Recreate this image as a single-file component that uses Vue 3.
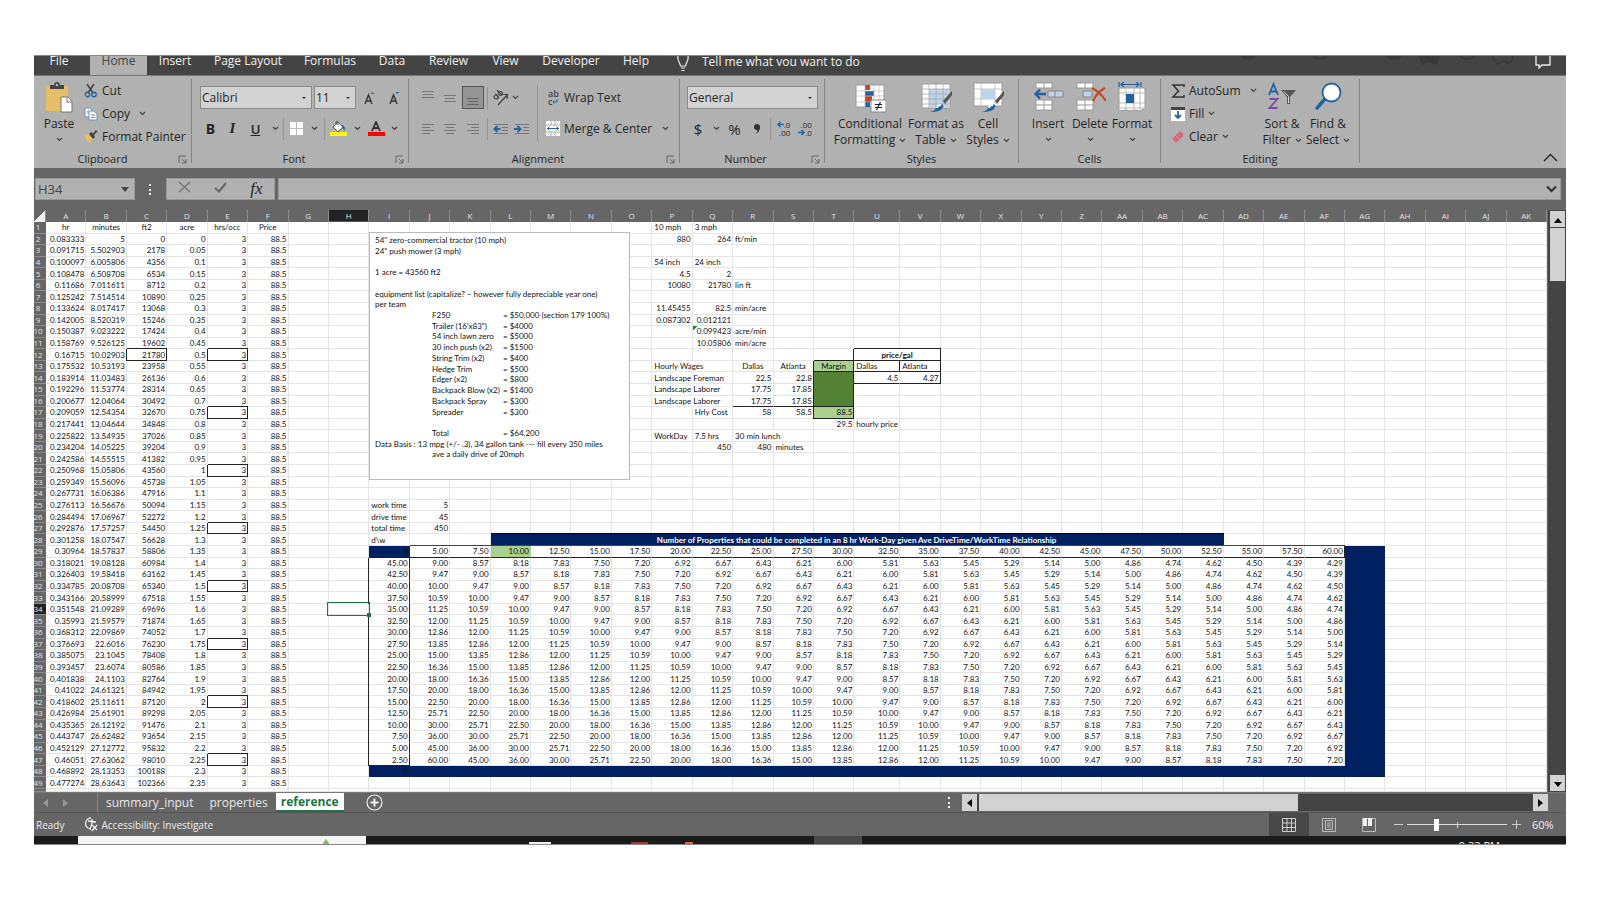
<script setup>
import { ref } from 'vue'

const tabs = ['File', 'Home', 'Insert', 'Page Layout', 'Formulas', 'Data', 'Review', 'View', 'Developer', 'Help']
const sheets = ['summary_input', 'properties', 'reference']
const zoomLevel = ref(60)

function colName(i) {
  return i < 26 ? String.fromCharCode(65 + i) : 'A' + String.fromCharCode(39 + i)
}
const columns = Array.from({ length: 37 }, (_, i) => colName(i))
const col = (name) => columns.indexOf(name)

const cells = {}
function put(name, row, text, cls = '') {
  const key = col(name) + ':' + row
  const old = cells[key] || { text: '', cls: '', span: 1 }
  cells[key] = { ...old, text: text ?? old.text, cls: old.cls + ' ' + cls }
}
const general = (v) => String(Number(v.toFixed(v >= 10 ? 5 : 6)))

/* mowing time by acreage */
;['hr', 'minutes', 'ft2', 'acre', 'hrs/occ', 'Price'].forEach((t, i) => put(columns[i], 1, t, 'c'))
const minutesPerAcre = 1 / (11 / 126 + 1 / 82.5)
for (let i = 0; i < 48; i++) {
  const row = i + 2
  const minutes = 5 + (minutesPerAcre * i) / 20
  put('A', row, general(minutes / 60), 'r')
  put('B', row, general(minutes), 'r')
  put('C', row, String(2178 * i), row === 12 ? 'r box' : 'r')
  put('D', row, String(Number((i / 20).toFixed(2))), 'r')
  put('E', row, '3', row >= 12 && row % 5 === 2 ? 'r box' : 'r')
  put('F', row, '88.5', 'r')
}

/* rates and wages */
const loose = [
  ['P', 1, '10 mph'], ['Q', 1, '3 mph'],
  ['P', 2, '880', 'r'], ['Q', 2, '264', 'r'], ['R', 2, 'ft/min'],
  ['P', 4, '54 inch'], ['Q', 4, '24 inch'],
  ['P', 5, '4.5', 'r'], ['Q', 5, '2', 'r'],
  ['P', 6, '10080', 'r'], ['Q', 6, '21780', 'r'], ['R', 6, 'lin ft'],
  ['P', 8, '11.45455', 'r'], ['Q', 8, '82.5', 'r'], ['R', 8, 'min/acre'],
  ['P', 9, '0.087302', 'r'], ['Q', 9, '0.012121', 'r'],
  ['Q', 10, '0.099423', 'r flag'], ['R', 10, 'acre/min'],
  ['Q', 11, '10.05806', 'r'], ['R', 11, 'min/acre'],
  ['U', 12, 'price/gal', 'c b box'],
  ['P', 13, 'Hourly Wages', 'spill'], ['R', 13, 'Dallas', 'c'], ['S', 13, 'Atlanta', 'c'],
  ['T', 13, 'Margin', 'c light box'], ['U', 13, 'Dallas', 'box'], ['V', 13, 'Atlanta', 'box'],
  ['P', 14, 'Landscape Foreman', 'spill'], ['R', 14, '22.5', 'r'], ['S', 14, '22.8', 'r'],
  ['U', 14, '4.5', 'r bb'], ['V', 14, '4.27', 'r bb br'],
  ['P', 15, 'Landscape Laborer', 'spill'], ['R', 15, '17.75', 'r'], ['S', 15, '17.85', 'r'],
  ['P', 16, 'Landscape Laborer', 'spill'], ['R', 16, '17.75', 'r bb'], ['S', 16, '17.85', 'r bb'],
  ['T', 14, '', 'dark bl br'], ['T', 15, '', 'dark bl br'], ['T', 16, '', 'dark bl br'],
  ['Q', 17, 'Hrly Cost'], ['R', 17, '58', 'r'], ['S', 17, '58.5', 'r'], ['T', 17, '88.5', 'r light box'],
  ['T', 18, '29.5', 'r'], ['U', 18, 'hourly price'],
  ['P', 19, 'WorkDay'], ['Q', 19, '7.5 hrs'], ['R', 19, '30 min lunch', 'spill'],
  ['Q', 20, '450', 'r'], ['R', 20, '480', 'r'], ['S', 20, 'minutes'],
  ['I', 25, 'work time'], ['J', 25, '5', 'r'],
  ['I', 26, 'drive time'], ['J', 26, '45', 'r'],
  ['I', 27, 'total time'], ['J', 27, '450', 'r'],
  ['I', 28, 'd\\w'], ['H', 34, '', 'active'],
]
loose.forEach(([c, r, t, k]) => put(c, r, t, k))
cells[col('U') + ':12'].span = 2

/* drive time / work time matrix */
put('L', 28, 'Number of Properties that could be completed in an 8 hr Work-Day given Ave DriveTime/WorkTime Relationship', 'c b navy title')
cells[col('L') + ':28'].span = 18
put('I', 29, '9', 'r navy ink')
for (let k = 0; k < 23; k++) {
  const work = 5 + 2.5 * k
  const c = columns[9 + k]
  put(c, 29, work.toFixed(2), 'r bt bb' + (k === 2 ? ' light' : '') + (k === 22 ? ' br' : ''))
  for (let n = 0; n < 18; n++) put(c, 30 + n, (450 / (work + 45 - 2.5 * n)).toFixed(2), 'r')
  put(c, 48, '', 'navy')
}
for (let n = 0; n < 18; n++) put('I', 30 + n, (45 - 2.5 * n).toFixed(2), 'r bl br' + (n === 17 ? ' bb' : ''))
put('I', 48, '0', 'r navy ink')
for (let r = 29; r <= 48; r++) put('AG', r, '', 'navy')

const rows = Array.from({ length: 50 }, (_, i) => {
  const row = i + 1
  const list = []
  for (let c = 0; c < 37; ) {
    const cell = cells[c + ':' + row] || { text: '', cls: '', span: 1 }
    list.push({ ...cell, key: c })
    c += cell.span
  }
  return { row, list }
})

const equipment = [
  ['F250', '= $50,000 (section 179 100%)'], ["Trailer (16'x83\")", '= $4000'], ['54 inch lawn zero', '= $5000'],
  ['30 inch push (x2)', '= $1500'], ['String Trim (x2)', '= $400'], ['Hedge Trim', '= $500'], ['Edger (x2)', '= $800'],
  ['Backpack Blow (x2)', '= $1400'], ['Backpack Spray', '= $300'], ['Spreader', '= $300'],
]
</script>

<template>
  <main class="screen">
    <div class="window">
      <nav class="tabs" aria-label="Ribbon tabs">
        <button v-for="t in tabs" :key="t" :class="{ on: t === 'Home', file: t === 'File' }">{{ t }}</button>
        <label class="tell">
          <svg width="12" height="16" viewBox="0 0 12 16" fill="none" stroke="#f0f0f0" stroke-width="1.2"><path d="M1 0C0 5 3 6 3.500 10h5C9 6 12 5 11 0M4 12h4M4.500 14.500h3" /></svg>
          <input aria-label="Tell me what you want to do" placeholder="Tell me what you want to do" />
        </label>
        <svg class="deco" width="300" height="12" viewBox="0 0 300 12" fill="none" stroke="#393939" stroke-width="1.500">
          <path d="M0 0a8 6 0 0 0 14 0zM146 0a8 6 0 0 0 14 0zM178 0l4 8 6-3 7 3 3-8z" fill="#393939" /><path d="M72 0a8 6 0 0 0 14 0M219 0a8 6 0 0 0 14 0M251 0l5 8 7-3 6 3 3-8" />
        </svg>
        <button class="comment" aria-label="Comments">
          <svg width="16" height="13" viewBox="0 0 16 13" fill="none" stroke="#eee" stroke-width="1.300"><path d="M1 0v9h3v3l3-3h8V0" /></svg>
        </button>
      </nav>

      <section class="ribbon">
        <div class="group clipboard">
          <div class="body">
            <button class="big paste">
              <svg width="28" height="31" viewBox="0 0 28 31"><path d="M1 4h22v25H1z" fill="#e6bd69" /><path d="M5 7V3h4c0-4 6-4 6 0h4v4z" fill="#444" /><circle cx="12" cy="3" r="1.300" fill="#b1b1b1" /><path d="M16 15h7l4 4v11H16z" fill="#fff" stroke="#777" /><path d="M22 15v5h5" fill="none" stroke="#777" /></svg>
              <span>Paste</span>
              <svg class="chev" width="7" height="5" viewBox="0 0 7 5"><path d="M1 1l2.500 2.500L6 1" /></svg>
            </button>
            <div class="stack">
              <button><svg width="14" height="14" viewBox="0 0 14 14" fill="none"><path d="M3 0l6 9M10 0L4 9" stroke="#444" stroke-width="1.600" /><circle cx="3.500" cy="10.500" r="2.200" stroke="#2b63a0" stroke-width="1.400" /><circle cx="10" cy="10.500" r="2.200" stroke="#2b63a0" stroke-width="1.400" /></svg>Cut</button>
              <button><svg width="14" height="14" viewBox="0 0 14 14" fill="#fff" stroke="#6d8fb5"><path d="M1 1h5l2 2v7H1z" /><path d="M5 4h5l3 3v6H5z" /><path d="M7 8h4M7 10.500h4M3 4h2M3 6h2" /></svg>Copy<svg class="chev far" width="7" height="5" viewBox="0 0 7 5"><path d="M1 1l2.500 2.500L6 1" /></svg></button>
              <button><svg width="14" height="14" viewBox="0 0 14 14"><path d="M0 5l5-1 4 4-3 5-3-2z" fill="#e6bd69" /><path d="M5 4l2-2 2 1.500L12 0l1.500 1.500L10 5l1 2-2 2z" fill="#444" /></svg>Format Painter</button>
            </div>
          </div>
          <div class="caption">Clipboard<svg class="launch" width="9" height="9" viewBox="0 0 9 9"><path d="M1 8V1h7M4 4l3.500 3.500M8 4v4H4" /></svg></div>
        </div>

        <div class="group font">
          <div class="body rows">
            <div class="line font1">
              <label class="combo"><select aria-label="Font"><option>Calibri</option></select><svg width="6" height="4" viewBox="0 0 6 4"><path d="M1 1h4L3 3z" fill="#333" /></svg></label>
              <label class="combo"><select aria-label="Font size"><option>11</option></select><svg width="6" height="4" viewBox="0 0 6 4"><path d="M1 1h4L3 3z" fill="#333" /></svg></label>
              <button aria-label="Increase font size"><svg width="12" height="14" viewBox="0 0 12 14" fill="none"><path d="M1 13L4.500 4 8 13M2.200 10h4.600" stroke="#333" stroke-width="1.400" /><path d="M6.500 3L8.500 1l2 2z" fill="#2b63a0" /></svg></button>
              <button aria-label="Decrease font size"><svg width="12" height="14" viewBox="0 0 12 14" fill="none"><path d="M1 13L4.500 4 8 13M2.200 10h4.600" stroke="#333" stroke-width="1.400" /><path d="M6.500 1h4l-2 2z" fill="#2b63a0" /></svg></button>
            </div>
            <div class="line font2">
              <button class="bold">B</button><button class="ital">I</button><button class="under">U</button>
              <svg class="chev" width="7" height="5" viewBox="0 0 7 5"><path d="M1 1l2.500 2.500L6 1" /></svg><i class="bar"></i>
              <button aria-label="Borders"><svg width="13" height="13" viewBox="0 0 13 13"><path d="M0 0h13v13H0z" fill="#fff" /><path d="M6.500 0v13M0 6.500h13" stroke="#bbb" /></svg></button>
              <svg class="chev" width="7" height="5" viewBox="0 0 7 5"><path d="M1 1l2.500 2.500L6 1" /></svg><i class="bar"></i>
              <button aria-label="Fill colour"><svg width="17" height="15" viewBox="0 0 17 15"><path d="M3 6l5-5 5 5-5 5z" fill="#fff" stroke="#555" /><path d="M6 4V1q1-1 2 0v3" fill="none" stroke="#555" /><path d="M12 4q4 1 2.500 6l-2-3z" fill="#2b63a0" /><path d="M0 11h17v4H0z" fill="#ff0" /></svg></button>
              <svg class="chev" width="7" height="5" viewBox="0 0 7 5"><path d="M1 1l2.500 2.500L6 1" /></svg>
              <button aria-label="Font colour"><svg width="17" height="15" viewBox="0 0 17 15"><path d="M4 10L8 1l4 9M5.500 7h5" fill="none" stroke="#333" stroke-width="1.800" /><path d="M0 11h17v4H0z" fill="#f00" /></svg></button>
              <svg class="chev" width="7" height="5" viewBox="0 0 7 5"><path d="M1 1l2.500 2.500L6 1" /></svg>
            </div>
          </div>
          <div class="caption">Font<svg class="launch" width="9" height="9" viewBox="0 0 9 9"><path d="M1 8V1h7M4 4l3.500 3.500M8 4v4H4" /></svg></div>
        </div>

        <div class="group align">
          <div class="body">
            <div class="rows">
              <div class="line align1">
                <button aria-label="Top align"><svg width="14" height="16" viewBox="0 0 14 16" stroke="#777"><path d="M1 1.500h12M2 4.500h10M1 7.500h12" /></svg></button>
                <button aria-label="Middle align"><svg width="14" height="16" viewBox="0 0 14 16" stroke="#777"><path d="M1 5.500h12M2 8.500h10M1 11.500h12" /></svg></button>
                <button class="chosen" aria-label="Bottom align"><svg width="14" height="16" viewBox="0 0 14 16" stroke="#666"><path d="M1 8.500h12M2 11.500h10M1 14.500h12" /></svg></button>
                <i class="bar"></i>
                <button aria-label="Orientation"><svg width="17" height="16" viewBox="0 0 17 16" fill="none" stroke="#444" stroke-width="1.200"><path d="M6 15L15 5M11 4.500l4.500 0L15 9" /><circle cx="4" cy="7" r="2" /><path d="M3.500 3.500L7 8" /><circle cx="8.500" cy="3.500" r="2" /><path d="M5 0l5 5" /></svg></button>
                <svg class="chev" width="7" height="5" viewBox="0 0 7 5"><path d="M1 1l2.500 2.500L6 1" /></svg>
              </div>
              <div class="line align2">
                <button aria-label="Align left"><svg width="14" height="12" viewBox="0 0 14 12" stroke="#777"><path d="M1 1.500h12M1 4.500h8M1 7.500h12M1 10.500h8" /></svg></button>
                <button aria-label="Centre"><svg width="14" height="12" viewBox="0 0 14 12" stroke="#777"><path d="M1 1.500h12M3 4.500h8M1 7.500h12M3 10.500h8" /></svg></button>
                <button aria-label="Align right"><svg width="14" height="12" viewBox="0 0 14 12" stroke="#777"><path d="M1 1.500h12M5 4.500h8M1 7.500h12M5 10.500h8" /></svg></button>
                <i class="bar"></i>
                <button aria-label="Decrease indent"><svg width="16" height="12" viewBox="0 0 16 12"><path d="M1 1.500h14M9 4.500h6M9 7.500h6M1 10.500h14" stroke="#777" /><path d="M7.500 6H2M4.500 3l-3 3 3 3" stroke="#2b63a0" stroke-width="2" fill="none" /></svg></button>
                <button aria-label="Increase indent"><svg width="16" height="12" viewBox="0 0 16 12"><path d="M1 1.500h14M9 4.500h6M9 7.500h6M1 10.500h14" stroke="#777" /><path d="M0 6h6M3.500 3l3 3-3 3" stroke="#2b63a0" stroke-width="2" fill="none" /></svg></button>
              </div>
            </div>
            <i class="bar tall"></i>
            <div class="rows wrapcol">
              <button class="line"><span class="abc" aria-hidden="true"><i>ab</i><i>c<svg width="6" height="5" viewBox="0 0 6 5"><path d="M5 0v3H1M2.500 1.500L1 3l1.500 1.500" stroke="#2b63a0" fill="none" /></svg></i></span>Wrap Text</button>
              <button class="line"><svg width="14" height="15" viewBox="0 0 14 15"><path d="M0 0h14v15H0z" fill="#fff" /><path d="M0 4h14M0 11h14M5 0v4M9 0v4M5 11v4M9 11v4" stroke="#aaa" /><path d="M1 7.500h12M3.500 5.500l-2 2 2 2M10.500 5.500l2 2-2 2" stroke="#2b63a0" fill="none" /></svg>Merge &amp; Center<svg class="chev far" width="7" height="5" viewBox="0 0 7 5"><path d="M1 1l2.500 2.500L6 1" /></svg></button>
            </div>
          </div>
          <div class="caption">Alignment<svg class="launch" width="9" height="9" viewBox="0 0 9 9"><path d="M1 8V1h7M4 4l3.500 3.500M8 4v4H4" /></svg></div>
        </div>

        <div class="group number">
          <div class="body rows">
            <label class="combo"><select aria-label="Number format"><option>General</option></select><svg width="6" height="4" viewBox="0 0 6 4"><path d="M1 1h4L3 3z" fill="#333" /></svg></label>
            <div class="line num2">
              <button class="sym">$</button><svg class="chev" width="7" height="5" viewBox="0 0 7 5"><path d="M1 1l2.500 2.500L6 1" /></svg>
              <button class="sym">%</button>
              <button aria-label="Comma style"><svg width="8" height="12" viewBox="0 0 8 12"><circle cx="4" cy="4" r="3" fill="#333" /><path d="M7 4q0 5-4.500 7 2-2 2-5z" fill="#333" /></svg></button>
              <i class="bar"></i>
              <button class="dec" aria-label="Increase decimal"><span><svg width="7" height="7" viewBox="0 0 7 7"><path d="M7 3.500H2M3.500 1L1 3.500 3.500 6" stroke="#2b63a0" stroke-width="1.700" fill="none" /></svg>.0</span><span>.00</span></button>
              <button class="dec" aria-label="Decrease decimal"><span>.00</span><span><svg width="7" height="7" viewBox="0 0 7 7"><path d="M0 3.500h5M3.500 1L6 3.500 3.500 6" stroke="#2b63a0" stroke-width="1.700" fill="none" /></svg>.0</span></button>
            </div>
          </div>
          <div class="caption">Number<svg class="launch" width="9" height="9" viewBox="0 0 9 9"><path d="M1 8V1h7M4 4l3.500 3.500M8 4v4H4" /></svg></div>
        </div>

        <div class="group styles">
          <div class="body">
            <button class="big">
              <svg width="31" height="31" viewBox="0 0 31 31"><path d="M1 3h28v22H1z" fill="#fff" stroke="#999" /><path d="M10 3h5v5h-5zM10 14h7v6h-7z" fill="#c6451f" /><path d="M10 9h9v5h-9zM10 20h5v5h-5z" fill="#26609f" /><path d="M1 9h28M1 14h28M1 20h28M10 3v22M19 3v22M24 3v22" stroke="#bbb" stroke-width=".7" /><path d="M16 18h15v12H16z" fill="#fff" stroke="#888" /><path d="M20 22.500h7M20 25.500h7M25.500 20l-4 8" stroke="#222" stroke-width="1.200" /></svg>
              <span>Conditional</span><span>Formatting<svg class="chev" width="7" height="5" viewBox="0 0 7 5"><path d="M1 1l2.500 2.500L6 1" /></svg></span>
            </button>
            <button class="big">
              <svg width="31" height="31" viewBox="0 0 31 31"><path d="M1 2h28v24H1z" fill="#fff" stroke="#999" /><path d="M8 7h21v19H8z" fill="#bfd2ea" /><path d="M1 7h28M1 12h28M1 17h28M1 22h28M8 2v24M15 2v24M22 2v24" stroke="#aaa" stroke-width=".8" /><path d="M31 9l-9 10 2 3 7-9z" fill="#555" /><path d="M9 30q6-1 6-5 3-4 7-2 1 7-13 7z" fill="#26609f" /><path d="M16 26q0-3 4-3" stroke="#fff" stroke-width="2" fill="none" /></svg>
              <span>Format as</span><span>Table<svg class="chev" width="7" height="5" viewBox="0 0 7 5"><path d="M1 1l2.500 2.500L6 1" /></svg></span>
            </button>
            <button class="big">
              <svg width="31" height="31" viewBox="0 0 31 31"><path d="M1 1h28v23H1z" fill="#fff" stroke="#999" /><path d="M1 7h28M1 17h28M8 1v23M22 1v23" stroke="#bbb" stroke-width=".8" /><path d="M8 7h14v10H8z" fill="#bfd2ea" /><path d="M31 9l-9 10 2 3 7-9z" fill="#555" /><path d="M9 30q6-1 6-5 3-4 7-2 1 7-13 7z" fill="#26609f" /><path d="M16 26q0-3 4-3" stroke="#fff" stroke-width="2" fill="none" /></svg>
              <span>Cell</span><span>Styles<svg class="chev" width="7" height="5" viewBox="0 0 7 5"><path d="M1 1l2.500 2.500L6 1" /></svg></span>
            </button>
          </div>
          <div class="caption">Styles</div>
        </div>

        <div class="group cellsg">
          <div class="body">
            <button class="big">
              <svg width="31" height="31" viewBox="0 0 31 31"><path d="M3 1h16v5H3zM3 18h16v10H3zM3 23h16M11 1v5M11 18v10" fill="#fff" stroke="#999" /><path d="M15 9h15v6H15zM22 9v6" fill="#bfd2ea" stroke="#888" /><path d="M13 12H3M7 7.500L2.500 12 7 16.500" stroke="#26609f" stroke-width="2.400" fill="none" /></svg>
              <span>Insert</span><svg class="chev" width="7" height="5" viewBox="0 0 7 5"><path d="M1 1l2.500 2.500L6 1" /></svg>
            </button>
            <button class="big">
              <svg width="31" height="31" viewBox="0 0 31 31"><path d="M2 1h16v5H2zM2 18h16v10H2zM2 23h16M10 1v5M10 18v10" fill="#fff" stroke="#999" /><path d="M8 9h9v6H8z" fill="#bfd2ea" stroke="#888" /><path d="M17 6q8 4 14 13M30 6q-8 4-12 13" stroke="#c6451f" stroke-width="2" fill="none" /></svg>
              <span>Delete</span><svg class="chev" width="7" height="5" viewBox="0 0 7 5"><path d="M1 1l2.500 2.500L6 1" /></svg>
            </button>
            <button class="big">
              <svg width="31" height="31" viewBox="0 0 31 31"><path d="M4 2.500h18M7 0L4 2.500 7 5M19 0l3 2.500L19 5M2 0v5M24 0v5" stroke="#26609f" stroke-width="1.200" fill="none" /><path d="M2 6h26v20l-5 3-5-1-4 1-5-1-7 1z" fill="#fff" stroke="#999" /><path d="M2 11h26M2 21h26M2 26h26M9 6v22M17 6v22M23 6v22" stroke="#bbb" /><path d="M9 12h8v9H9z" fill="#26609f" /></svg>
              <span>Format</span><svg class="chev" width="7" height="5" viewBox="0 0 7 5"><path d="M1 1l2.500 2.500L6 1" /></svg>
            </button>
          </div>
          <div class="caption">Cells</div>
        </div>

        <div class="group editing">
          <div class="body">
            <div class="stack">
              <button><svg width="14" height="14" viewBox="0 0 14 14" fill="none" stroke="#333" stroke-width="1.500"><path d="M13 3V1H2l5.500 6L2 13h11v-2" /></svg>AutoSum<svg class="chev far" width="7" height="5" viewBox="0 0 7 5"><path d="M1 1l2.500 2.500L6 1" /></svg></button>
              <button><svg width="14" height="14" viewBox="0 0 14 14"><path d="M0 0h14v14H0z" fill="#fff" /><path d="M0 0h14v3H0z" fill="#444" /><path d="M7 4v7M4 8l3 3 3-3" stroke="#26609f" stroke-width="1.800" fill="none" /></svg>Fill<svg class="chev" width="7" height="5" viewBox="0 0 7 5"><path d="M1 1l2.500 2.500L6 1" /></svg></button>
              <button><svg width="14" height="14" viewBox="0 0 14 14"><path d="M2 8l6-6q1-1 2 0l2 2q1 1 0 2l-6 6q-1 1-2 0l-2-2q-1-1 0-2z" fill="#d9667b" /><path d="M4.500 5.500l4 4" stroke="#e99aa8" fill="none" /></svg>Clear<svg class="chev" width="7" height="5" viewBox="0 0 7 5"><path d="M1 1l2.500 2.500L6 1" /></svg></button>
            </div>
            <button class="big">
              <svg width="31" height="31" viewBox="0 0 31 31" fill="none"><path d="M2 13L6.500 2 11 13M3.500 9.500h6" stroke="#26609f" stroke-width="1.800" /><path d="M2.500 17h8l-8 9h8" stroke="#7d4aa3" stroke-width="1.800" /><path d="M14 8h15l-6 7v7h-3v-7z" fill="#555" /><path d="M17 9.500l4.500 5V21" stroke="#ddd" /></svg>
              <span>Sort &amp;</span><span>Filter<svg class="chev" width="7" height="5" viewBox="0 0 7 5"><path d="M1 1l2.500 2.500L6 1" /></svg></span>
            </button>
            <button class="big">
              <svg width="31" height="31" viewBox="0 0 31 31"><path d="M12 17L4 26" stroke="#26609f" stroke-width="3.500" stroke-linecap="round" /><circle cx="18.500" cy="10.500" r="9" fill="#fff" stroke="#26609f" stroke-width="1.800" /></svg>
              <span>Find &amp;</span><span>Select<svg class="chev" width="7" height="5" viewBox="0 0 7 5"><path d="M1 1l2.500 2.500L6 1" /></svg></span>
            </button>
          </div>
          <div class="caption">Editing</div>
        </div>
        <button class="collapse" aria-label="Collapse the ribbon"><svg width="15" height="9" viewBox="0 0 15 9" fill="none" stroke="#222" stroke-width="1.300"><path d="M1 8l6.500-6.500L14 8" /></svg></button>
      </section>

      <section class="formula">
        <label class="name"><input aria-label="Name box" value="H34" /><svg width="8" height="5" viewBox="0 0 8 5"><path d="M0 0h8L4 5z" fill="#444" /></svg></label>
        <span class="dots" aria-hidden="true"></span>
        <div class="fx">
          <button aria-label="Cancel"><svg width="13" height="12" viewBox="0 0 13 12" stroke="#777" stroke-width="1.500"><path d="M1 1l11 10M12 1L1 11" /></svg></button>
          <button aria-label="Enter"><svg width="13" height="11" viewBox="0 0 13 11" fill="none" stroke="#666" stroke-width="2.200"><path d="M1 6l4 3.500L12 1" /></svg></button>
          <button class="fn">fx</button>
        </div>
        <label class="entry"><input aria-label="Formula bar" /><svg width="11" height="8" viewBox="0 0 11 8" fill="none" stroke="#333" stroke-width="2.200"><path d="M1 1.500l4.500 4.500L10 1.500" /></svg></label>
      </section>

      <section class="work">
        <div class="sheet">
          <table>
            <thead>
              <tr><th class="corner"></th><th v-for="c in columns" :key="c" :class="{ sel: c === 'H' }">{{ c }}</th></tr>
            </thead>
            <tbody>
              <tr v-for="r in rows" :key="r.row">
                <th :class="{ sel: r.row === 34 }">{{ r.row < 50 ? r.row : '' }}</th>
                <td v-for="d in r.list" :key="d.key" :class="[d.cls, 'span' + d.span]" :colspan="d.span">{{ d.text }}</td>
              </tr>
            </tbody>
          </table>
          <aside class="note">
            <p>54" zero-commercial tractor (10 mph)</p>
            <p>24" push mower (3 mph)</p>
            <p>&nbsp;</p>
            <p>1 acre = 43560 ft2</p>
            <p>&nbsp;</p>
            <p>equipment list (capitalize? ~ however fully depreciable year one)</p>
            <p>per team</p>
            <p v-for="e in equipment" :key="e[0]" class="item"><span>{{ e[0] }}</span>{{ e[1] }}</p>
            <p>&nbsp;</p>
            <p class="item"><span>Total</span>= $64,200</p>
            <p>Data Basis : 13 mpg (+/- .3), 34 gallon tank --- fill every 350 miles</p>
            <p class="item">ave a daily drive of 20mph</p>
          </aside>
        </div>
        <div class="vscroll">
          <button aria-label="Scroll up"><svg width="8" height="5" viewBox="0 0 8 5"><path d="M0 5l4-5 4 5z" /></svg></button>
          <div class="thumb"></div>
          <button class="end" aria-label="Scroll down"><svg width="8" height="5" viewBox="0 0 8 5"><path d="M0 0h8L4 5z" /></svg></button>
        </div>
      </section>

      <section class="sheetbar">
        <div class="arrows">
          <button aria-label="Previous sheet"><svg width="5" height="8" viewBox="0 0 5 8"><path d="M5 0v8L0 4z" fill="#999" /></svg></button>
          <button aria-label="Next sheet"><svg width="5" height="8" viewBox="0 0 5 8"><path d="M0 0v8l5-4z" fill="#999" /></svg></button>
        </div>
        <button v-for="s in sheets" :key="s" class="sheettab" :class="{ on: s === 'reference' }">{{ s }}</button>
        <button class="add" aria-label="New sheet"><svg width="17" height="17" viewBox="0 0 17 17" fill="none" stroke="#eee"><circle cx="8.500" cy="8.500" r="7.500" stroke-width="1.200" /><path d="M8.500 4.500v8M4.500 8.500h8" stroke-width="2" /></svg></button>
        <span class="dots" aria-hidden="true"></span>
        <div class="hscroll">
          <button aria-label="Scroll left"><svg width="5" height="8" viewBox="0 0 5 8"><path d="M5 0v8L0 4z" /></svg></button>
          <div class="thumb"></div>
          <button class="end" aria-label="Scroll right"><svg width="5" height="8" viewBox="0 0 5 8"><path d="M0 0v8l5-4z" /></svg></button>
        </div>
      </section>

      <footer class="status">
        <span>Ready</span>
        <button class="access"><svg width="15" height="15" viewBox="0 0 15 15" fill="none" stroke="#eee" stroke-width="1.300"><path d="M7 1a5.500 5.500 0 1 0 0 11M4 4l8 1M8 2v4l-2 7M8 8l5 5M13 8l-5 6" /></svg>Accessibility: Investigate</button>
        <div class="views">
          <button class="on" aria-label="Normal view"><svg width="14" height="14" viewBox="0 0 14 14" fill="none" stroke="#ccc"><path d="M.5.500h13v13H.5zM.5 5h13M.5 9.500h13M5 .5v13M9.500.500v13" /></svg></button>
          <button aria-label="Page layout view"><svg width="14" height="14" viewBox="0 0 14 14" fill="none" stroke="#bbb"><path d="M.5.500h13v13H.5zM3.500 2.500h7v9h-7zM5 5h4M5 7h4M5 9h4" /></svg></button>
          <button aria-label="Page break preview"><svg width="14" height="14" viewBox="0 0 14 14" fill="none" stroke="#bbb"><path d="M.5.500h13v13H.5z" /><path d="M1 0h4v8H1zM6 0h4v8H6z" fill="#eee" stroke="none" /></svg></button>
        </div>
        <button class="pm" aria-label="Zoom out"><svg width="9" height="9" viewBox="0 0 9 9" stroke="#ccc"><path d="M0 4.500h9" /></svg></button>
        <input v-model="zoomLevel" type="range" min="10" max="184" aria-label="Zoom" />
        <button class="pm" aria-label="Zoom in"><svg width="9" height="9" viewBox="0 0 9 9" stroke="#ccc"><path d="M0 4.500h9M4.500 0v9" /></svg></button>
        <span class="pct">{{ zoomLevel }}%</span>
      </footer>

      <div class="taskbar">
        <div class="search"><svg width="8" height="6" viewBox="0 0 8 6"><path d="M4 0l4 6H0z" fill="#7dbb5a" /></svg></div>
        <svg class="apps" width="170" height="8" viewBox="0 0 170 8"><path d="M0 6h22v2H0z" fill="#eee" /><path d="M102 6h17v2h-17z" fill="#a33c32" /><path d="M156 6h8v2h-8z" fill="#e0603c" /></svg>
        <div class="running"></div>
        <span class="clock">9:33 PM</span>
      </div>
    </div>
  </main>
</template>

<style>
body { margin: 0; background: #fff; }
</style>

<style scoped>
* { box-sizing: border-box; }
.screen { min-height: 100vh; padding: 55px 34px; display: flex; font: 12px/16px "Open Sans", "Noto Sans", sans-serif; color: #262626; }
.window { flex: 1; min-width: 0; display: flex; flex-direction: column; overflow: hidden; background: #666; }
button, input, select { font: inherit; color: inherit; border: 0; background: none; padding: 0; margin: 0; border-radius: 0; white-space: nowrap; }
input, select { min-width: 0; width: 100%; outline: 0; appearance: none; }
svg { flex: none; }
.chev path { fill: none; stroke: #444; stroke-width: 1.200; }

.tabs { display: grid; grid-template-columns: 56px 57px 56px 90px 74px 50px 63px 51px 80px 50px 1fr auto 42px; height: 21px; background: #444; color: #f0f0f0; border-bottom: 1px solid #777; border-top: 1px solid #888; overflow: hidden; }
.tabs button { height: 20px; display: flex; justify-content: center; line-height: 10px; }
.tabs .file { padding-right: 6px; }
.tabs .on { background: #b1b1b1; color: #444; }
.tabs .comment { justify-content: flex-start; padding-left: 11px; }
.deco { margin-right: -17px; }
.tell { display: flex; gap: 13px; padding-left: 16px; line-height: 10px; }
.tell input { height: 10px; overflow: visible; }
.tell input::placeholder { color: #f0f0f0; opacity: 1; }

.ribbon { display: flex; height: 92px; background: #b1b1b1; }
.group { display: flex; flex-direction: column; margin: 3px 0 5px; border-right: 1px solid #858585; }
.body { flex: 1; display: flex; }
.caption { height: 12px; line-height: 12px; text-align: center; font-size: 11px; position: relative; margin-bottom: -2px; }
.launch { position: absolute; right: 4px; top: 2px; fill: none; stroke: #666; }
.clipboard { width: 158px; } .clipboard .caption, .font .caption, .number .caption, .align .caption { padding-right: 20px; }
.font { width: 217px; padding-left: 8px; }
.align { width: 271px; padding-left: 8px; }
.number { width: 145px; padding-left: 7px; }
.styles { width: 194px; } .cellsg { width: 142px; } .editing { width: 199px; }
.big { display: flex; flex-direction: column; align-items: center; padding-top: 3px; }
.big > svg:first-child { margin-bottom: 3px; }
.big > span { display: flex; align-items: center; gap: 4px; }
.big > .chev { margin-top: 5px; }
.paste { width: 50px; }
.stack { display: flex; flex-direction: column; }
.stack button { display: flex; align-items: center; gap: 4px; height: 23px; }
.stack .far { margin-left: 5px; }
.rows { display: flex; flex-direction: column; gap: 8px; padding-top: 7px; }
.line { display: grid; height: 23px; align-items: center; justify-items: center; }
.font1 { grid-template-columns: 112px 42px 23px 23px; column-gap: 2px; }
.font2 { grid-template-columns: 21px 23px 23px 16px 1px 24px 13px 6px 23px 14px 24px 12px; }
.align1, .align2 { grid-template-columns: 22px 22px 24px 4px 23px 20px; }
.align1 .chev { justify-self: start; margin: 0; }
.bar { width: 1px; height: 22px; background: #949494; justify-self: center; }
.tall { height: 56px; margin: 6px 0 0 5px; }
.combo { display: flex; align-items: center; width: 100%; height: 23px; border: 1px solid #8a8a8a; background: #d2d2d2; padding: 0 4px 0 1px; }
.combo select { height: 20px; }
.number .combo { width: 131px; }
.bold { font-size: 14px; font-weight: 700; }
.ital { font: italic 700 15px "Liberation Serif", serif; }
.under { font-size: 13px; font-weight: 600; text-decoration: underline; }
.chosen { width: 22px; height: 23px; border: 1px solid #555; background: #949494; }
.line svg, .line button svg { display: block; margin: 0 auto; }
.line.align1 > .chev { margin: 0; }
.wrapcol { padding-left: 8px; }
.wrapcol .line { display: flex; gap: 4px; align-items: center; }
.wrapcol .line svg { margin: 0; }
.wrapcol .line .far { margin-left: 6px; }
.abc { display: flex; flex-direction: column; font-size: 9px; line-height: 8px; width: 14px; font-weight: 600; color: #444; padding-left: 2px; }
.abc i { font-style: normal; display: flex; align-items: center; }
.num2 { grid-template-columns: 22px 15px 21px 23px 5px 21px 22px; }
.sym { font-size: 15px; }
.dec { display: flex; flex-direction: column; font-size: 8px; line-height: 8px; align-items: flex-end; }
.dec span { display: flex; align-items: center; }
.styles .body { padding-left: 10px; gap: 4px; }
.styles .big { width: 54px; }
.styles .big:first-child { width: 70px; }
.styles .big:last-child { width: 42px; }
.cellsg .body { padding-left: 8px; }
.cellsg .big { width: 42px; }
.editing .body { padding-left: 10px; }
.editing .stack { width: 88px; }
.editing .big { width: 46px; }
.collapse { margin-left: auto; align-self: flex-end; padding: 0 8px 2px 0; }

.formula { display: flex; height: 42px; padding: 10px 5px 10px 1px; align-items: stretch; }
.formula label, .fx { display: flex; align-items: center; background: #b1b1b1; border: 1px solid #999; }
.name { width: 100px; padding: 0 5px 0 2px; font-size: 13px; color: #444; }
.dots { width: 3px; border-left: 2px dotted #eee; height: 11px; align-self: center; margin: 0 14px; }
.fx { width: 109px; justify-content: space-around; }
.fn { font: italic 17px "Liberation Serif", serif; }
.entry { flex: 1; margin-left: 3px; padding: 0 3px; }

.work { flex: 1; display: flex; min-height: 0; }
.sheet { flex: 1; min-width: 0; position: relative; background: #fff; display: flex; font: 8px/10px Lato, sans-serif; color: #111; }
table { flex: 1; min-width: 0; display: grid; grid-template-columns: 12px repeat(20, minmax(0, 1fr)) 46px repeat(16, minmax(0, 1fr)); grid-template-rows: 12px repeat(49, minmax(0, 1fr)) 3px; }
thead, tbody, tr { display: contents; }
th, td { padding: 0 2px; min-width: 0; min-height: 0; display: flex; align-items: center; white-space: nowrap; }
th { background: #666; color: #e4e4e4; font: 8px/10px "Open Sans", sans-serif; justify-content: center; border-right: 1px solid #8c8c8c; }
tbody th { border: 0; border-bottom: 1px solid #8c8c8c; padding: 0 4px 0 0; overflow: hidden; }
thead .sel { background: #222; border-bottom: 1px solid #217346; }
tbody .sel { background: #222; }
.corner { background: linear-gradient(135deg, #666 50%, #eee 50%); }
td { border-right: 1px solid #e4e4e4; border-bottom: 1px solid #e4e4e4; --t: transparent; --l: transparent; box-shadow: 0 -1px 0 var(--t), -1px 0 0 var(--l); }
.r { justify-content: flex-end; padding-right: 1px; }
.c { justify-content: center; }
.b { font-weight: 700; }
.span2 { grid-column: span 2; }
.span18 { grid-column: span 18; }
.spill { border-right-color: transparent; }
.box { --t: #222; --l: #222; border-color: #222; position: relative; }
.bt { --t: #444; position: relative; }
.bl { --l: #222; position: relative; }
.bb { border-bottom-color: #222; }
.br { border-right-color: #222; }
.light { background: #a9d08e; }
.light:not(.box) { border-right-color: #a9d08e; }
.dark { background: #548235; border-bottom-color: #548235; }
.navy { background: #002060; border-color: #002060; color: #fff; }
.title { --t: #000; position: relative; }
.ink { color: #000a20; }
.flag { background: linear-gradient(135deg, #1e8a3c 3px, transparent 3px); }
.active { position: relative; z-index: 2; }
.active::before { content: ""; position: absolute; inset: -2px; border: 1px solid #217346; }
.active::after { content: ""; position: absolute; right: -3px; bottom: -3px; width: 4px; height: 4px; background: #217346; }
.note { position: absolute; z-index: 3; left: 335px; top: 22px; width: 261px; height: 248px; padding: 2px 5px; background: #fff; border: 1px solid #bbb; line-height: 1.340; white-space: nowrap; }
.note p { margin: 0; }
.item { display: flex; padding-left: 57px; }
.item span { width: 71px; }

.vscroll { width: 19px; background: #444; padding: 1px 2px; display: flex; flex-direction: column; gap: 1px; border-left: 1px solid #666; }
.vscroll button { width: 15px; height: 16px; background: #d2d2d2; }
.vscroll .thumb { width: 15px; height: 53px; background: #d2d2d2; }
.vscroll .end { margin-top: auto; }

.sheetbar { display: flex; height: 21px; align-items: center; border-top: 1px solid #777; border-bottom: 1px solid #555; font-size: 12px; color: #e8e8e8; }
.arrows { width: 64px; display: flex; padding-left: 9px; gap: 15px; align-self: stretch; align-items: center; border-right: 1px solid #888; }
.sheettab { height: 19px; line-height: 18px; padding: 0 8px; align-self: flex-start; }
.sheettab.on { background: #fff; color: #217346; font-weight: 700; padding: 0 5px; border-bottom: 2px solid #217346; }
.add { margin-left: 22px; display: flex; }
.sheetbar .dots { margin: 0 11px 0 auto; }
.hscroll { width: 586px; height: 17px; display: flex; gap: 2px; background: #444; margin-right: 18px; }
.hscroll button { width: 15px; background: #d2d2d2; }
.hscroll .thumb { width: 319px; background: #d2d2d2; }
.hscroll .end { margin-left: auto; }

.status { display: flex; align-items: center; height: 23px; padding-left: 2px; color: #eee; font-size: 10px; }
.access { display: flex; align-items: center; gap: 2px; margin-left: 20px; }
.views { margin-left: auto; display: flex; align-self: stretch; }
.views button { width: 40px; }
.views svg { display: block; margin: 0 auto; }
.views .on { background: #484848; }
.pm { display: flex; margin: 0 4px 0 5px; }
.status input { width: 100px; height: 14px; background: linear-gradient(#ddd, #ddd) center / 100% 1px no-repeat, linear-gradient(#ddd, #ddd) center / 1px 6px no-repeat; }
.status input::-webkit-slider-thumb { appearance: none; width: 5px; height: 12px; background: #fff; }
.pct { width: 41px; padding-left: 7px; font-size: 11px; }

.taskbar { height: 9px; display: flex; background: #1b1b1b; overflow: hidden; border-bottom: 1px solid #888; }
.search { width: 288px; margin-left: 44px; background: #f4f4f4; padding: 3px 0 0 244px; line-height: 0; }
.apps { margin-left: 163px; }
.running { width: 48px; background: #4a4a4a; margin-left: 115px; }
.clock { margin-left: auto; padding-right: 66px; color: #fff; font-size: 11px; line-height: 20px; }
</style>
